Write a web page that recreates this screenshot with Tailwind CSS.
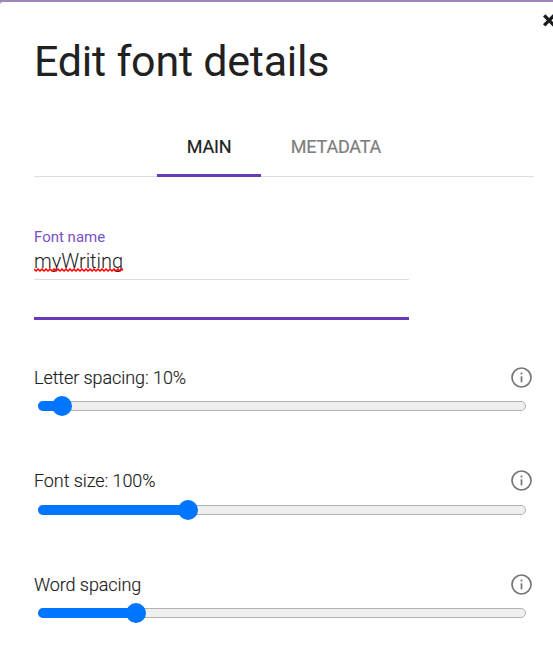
<!DOCTYPE html>
<html lang="en">
<head>
<meta charset="utf-8">
<title>Edit font details</title>
<script src="https://cdn.jsdelivr.net/npm/@tailwindcss/browser@4"></script>
</head>
<body class="h-[667px] w-[553px] overflow-hidden bg-[#9f86b8] font-['Roboto','Liberation_Sans',sans-serif] text-[#212121]">
<main class="relative mt-[2px] h-[665px] overflow-hidden rounded-tl-[3px] bg-white pl-[34px]">
  <button class="absolute top-[12px] left-[543px] h-[13px] w-[13px]" aria-label="Close">
    <svg class="block h-[13px] w-[13px]" viewBox="0 0 13 13" fill="none" stroke="#1c1c1c" stroke-width="3.4"><path d="M1.2 1.4L11 11.4M11 1.4L1.2 11.4"/></svg>
  </button>
  <h1 class="h-[115px] pt-[34px] text-[43px] leading-[50px] font-normal tracking-[-0.22px] whitespace-nowrap">Edit font details</h1>
  <nav class="flex h-[60px] w-[500px] justify-center border-b border-[#dedede] text-[18px] leading-[60px] font-normal tracking-[-0.2px]">
    <div class="h-[60px] w-[104px] border-b-[3px] border-[#673ab7] text-center [-webkit-text-stroke:0.2px]"><span>MAIN</span></div>
    <div class="h-[60px] w-[150px] text-center text-[#7e7e7e] [-webkit-text-stroke:0.2px]"><span>METADATA</span></div>
  </nav>
  <section class="mt-[50px] h-[93px] w-[375px] border-b-[3px] border-[#673ab7]">
    <label class="block h-[20px] text-[15px] leading-[20px] text-[#7a4fc4]"><span>Font name</span></label>
    <div class="relative h-[33px] border-b border-[#dedede] text-[20px] leading-[28px] font-light tracking-[-0.02px]">
      <span>myWriting</span>
      <svg class="absolute top-[21px] left-0 h-[4px] w-[89px]" viewBox="0 0 89 4" fill="none" stroke="#f00" stroke-width="1.5"><path d="M0 1l2 2 2-2 2 2 2-2 2 2 2-2 2 2 2-2 2 2 2-2 2 2 2-2 2 2 2-2 2 2 2-2 2 2 2-2 2 2 2-2 2 2 2-2 2 2 2-2 2 2 2-2 2 2 2-2 2 2 2-2 2 2 2-2 2 2 2-2 2 2 2-2 2 2 2-2 2 2 2-2 2 2 2-2 2 2 2-2 2 2"/></svg>
    </div>
  </section>
  <section class="mt-[47px] h-[103px]">
    <div class="flex h-[22px] w-[498px] items-center justify-between text-[18px] leading-[22px] font-light tracking-[-0.08px] [-webkit-text-stroke:0.15px]"><span>Letter spacing: 10%</span>
      <svg class="h-[22px] w-[22px]" viewBox="0 0 22 22" fill="none" stroke="#747474" stroke-width="1.7"><circle cx="11.5" cy="10.5" r="9.5"/><path d="M11.5 9.2v6M11.5 5.5v2"/></svg>
    </div>
    <div class="mt-[7px] ml-[4px] flex h-[20px] w-[488px] items-center"><div class="relative h-[10px] w-full rounded-full border border-[#b2b2b2] bg-[#efefef]"><div class="absolute -top-px -left-px h-[10px] w-[24px] rounded-l-full bg-[#0075ff]"></div><div class="absolute top-[-6px] left-[13px] h-[20px] w-[20px] rounded-full bg-[#0075ff]"></div></div></div>
  </section>
  <section class="h-[104px]">
    <div class="flex h-[22px] w-[498px] items-center justify-between text-[18px] leading-[22px] font-light tracking-[-0.08px] [-webkit-text-stroke:0.15px]"><span>Font size: 100%</span>
      <svg class="h-[22px] w-[22px]" viewBox="0 0 22 22" fill="none" stroke="#747474" stroke-width="1.7"><circle cx="11.5" cy="10.5" r="9.5"/><path d="M11.5 9.2v6M11.5 5.5v2"/></svg>
    </div>
    <div class="mt-[8px] ml-[4px] flex h-[20px] w-[488px] items-center"><div class="relative h-[10px] w-full rounded-full border border-[#b2b2b2] bg-[#efefef]"><div class="absolute -top-px -left-px h-[10px] w-[150px] rounded-l-full bg-[#0075ff]"></div><div class="absolute top-[-6px] left-[139px] h-[20px] w-[20px] rounded-full bg-[#0075ff]"></div></div></div>
  </section>
  <section>
    <div class="flex h-[22px] w-[498px] items-center justify-between text-[18px] leading-[22px] font-light tracking-[-0.08px] [-webkit-text-stroke:0.15px]"><span>Word spacing</span>
      <svg class="h-[22px] w-[22px]" viewBox="0 0 22 22" fill="none" stroke="#747474" stroke-width="1.7"><circle cx="11.5" cy="10.5" r="9.5"/><path d="M11.5 9.2v6M11.5 5.5v2"/></svg>
    </div>
    <div class="mt-[7px] ml-[4px] flex h-[20px] w-[488px] items-center"><div class="relative h-[10px] w-full rounded-full border border-[#b2b2b2] bg-[#efefef]"><div class="absolute -top-px -left-px h-[10px] w-[98px] rounded-l-full bg-[#0075ff]"></div><div class="absolute top-[-6px] left-[87px] h-[20px] w-[20px] rounded-full bg-[#0075ff]"></div></div></div>
  </section>
</main>
</body>
</html>
